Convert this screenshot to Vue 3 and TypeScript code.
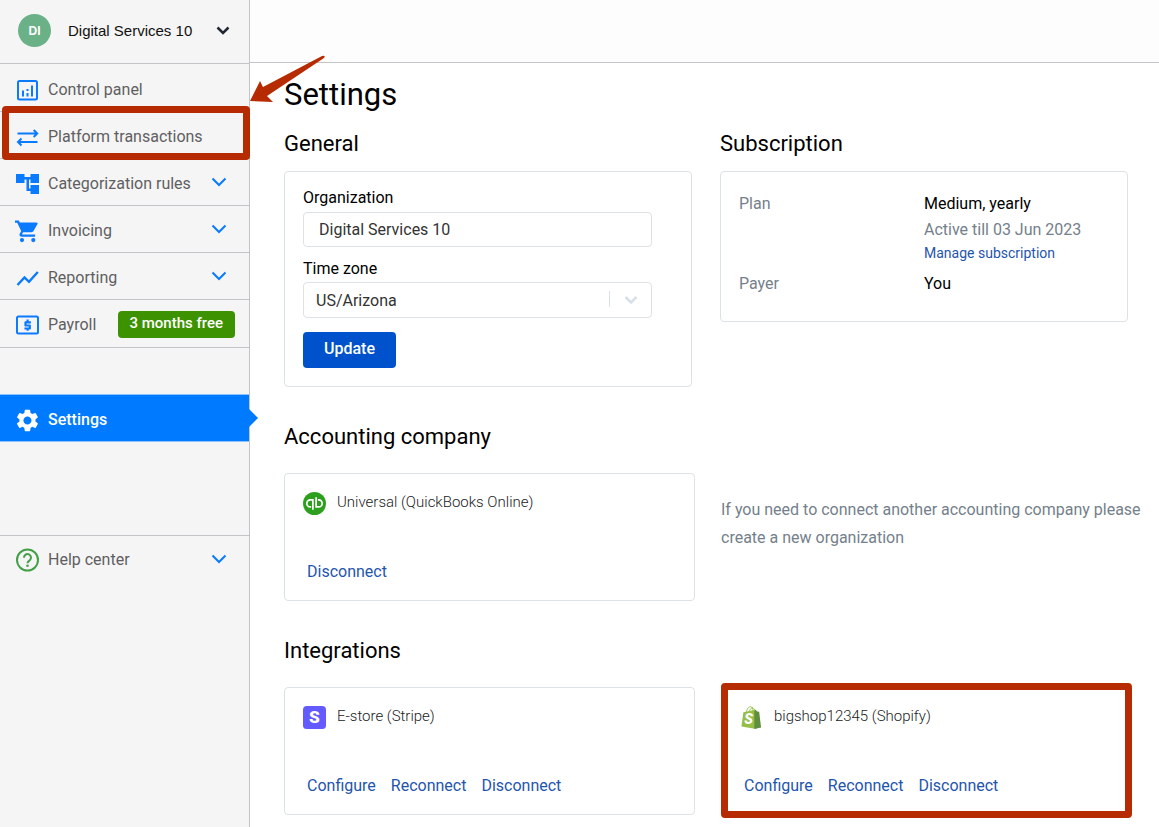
<script setup lang="ts">
import { ref } from 'vue'

interface NavItem {
  label: string
  icon: string
  expandable?: boolean
  badge?: string
  marked?: boolean
}

interface Integration {
  name: string
  logo: 'stripe' | 'shopify'
  marked: boolean
}

const nav: NavItem[] = [
  { label: 'Control panel', icon: 'panel' },
  { label: 'Platform transactions', icon: 'transfer', marked: true },
  { label: 'Categorization rules', icon: 'tree', expandable: true },
  { label: 'Invoicing', icon: 'cart', expandable: true },
  { label: 'Reporting', icon: 'chart', expandable: true },
  { label: 'Payroll', icon: 'payroll', badge: '3 months free' },
]

const integrations: Integration[] = [
  { name: 'E-store (Stripe)', logo: 'stripe', marked: false },
  { name: 'bigshop12345 (Shopify)', logo: 'shopify', marked: true },
]

const organization = ref('Digital Services 10')
const timeZone = ref('US/Arizona')
</script>

<template>
  <div class="app">
    <aside class="sidebar">
      <button class="account" type="button">
        <span class="avatar">DI</span>
        <span class="account-name">Digital Services 10</span>
        <svg class="account-caret" viewBox="0 0 14 10"><path d="M1.500 1.500 7 7 12.500 1.500" /></svg>
      </button>

      <nav class="nav">
        <a
          v-for="item in nav"
          :key="item.label"
          href="#"
          class="nav-item"
          :class="{ marked: item.marked, tall: item.badge }"
        >
          <svg class="nav-icon" viewBox="0 0 24 24">
            <template v-if="item.icon === 'panel'">
              <rect x="3" y="3" width="19" height="18.500" rx="1.500" class="line" />
              <path d="M7 12.500h2V18.500H7zM11.500 15h2v3.500h-2zM11.500 11h2v2h-2zM16 7.500h2v11h-2z" />
            </template>
            <path
              v-else-if="item.icon === 'transfer'"
              class="line"
              d="M2.500 8.500H22M18.700 5l3.500 3.500-3.500 3.500M22.500 17H3M6.500 13.500 3 17l3.500 3.500"
            />
            <path
              v-else-if="item.icon === 'tree'"
              d="M24 11V2h-8.500v3H9.500V2H1v9h8.500V7.500H11.500V19h4v3H24v-9h-8.500v3.500h-1.500v-9h1.500V11z"
            />
            <path
              v-else-if="item.icon === 'cart'"
              d="M7 19a2.100 2.100 0 1 0 0 4.200A2.100 2.100 0 0 0 7 19zM0 1.500v2.200h2.200l4 8.400-1.500 2.700c-.8 1.500.3 2.900 1.900 2.900h13.500v-2.200H7.400c-.3 0-.4-.2-.3-.4l1-1.800h8.400c.9 0 1.600-.5 2-1.200l4-7.100c.4-.7-.1-1.500-1-1.500H4.900L3.800 1.500zM18.300 19a2.100 2.100 0 1 0 0 4.200 2.100 2.100 0 0 0 0-4.200z"
            />
            <path v-else-if="item.icon === 'chart'" class="line heavy" d="M2.500 19 9.500 11.500l4.500 4.300L22.800 6" />
            <template v-else>
              <rect x="2" y="3.500" width="21" height="17" rx="1.500" class="line" />
              <path d="M11.500 17.800h2.200V16.600h1c.7 0 1.200-.5 1.200-1.100v-3c0-.6-.5-1.100-1.200-1.100h-3.100v-.8h4.300V8.300h-2.200V6.500h-2.200v1.800h-1c-.6 0-1.100.5-1.100 1.100v3c0 .6.500 1.100 1.100 1.100h3.200v.9H9.400v2.200h2.100z" />
            </template>
          </svg>
          <span>{{ item.label }}</span>
          <svg v-if="item.expandable" class="caret" viewBox="0 0 16 10"><path d="M1.500 1.500 8 8l6.500-6.500" /></svg>
          <span v-if="item.badge" class="badge">{{ item.badge }}</span>
        </a>

        <a href="#" class="nav-item active" aria-current="page">
          <svg class="nav-icon" viewBox="0 0 24 24">
            <path
              transform="translate(-1 -1) scale(1.120)"
              d="M19.140 12.940c.040-.3.060-.610.060-.940 0-.320-.020-.640-.070-.940l2.030-1.580a.490.490 0 0 0 .120-.610l-1.920-3.320a.488.488 0 0 0-.590-.220l-2.390.960c-.5-.380-1.030-.7-1.620-.940l-.360-2.540a.484.484 0 0 0-.480-.410h-3.840c-.240 0-.430.170-.470.410l-.360 2.540c-.590.240-1.130.570-1.620.940l-2.390-.960c-.220-.080-.470 0-.590.220L2.740 8.870c-.120.210-.080.470.120.610l2.030 1.580c-.050.3-.090.630-.090.940s.020.640.070.940l-2.030 1.580a.490.490 0 0 0-.120.610l1.920 3.320c.120.220.370.290.590.220l2.390-.960c.5.380 1.030.7 1.620.940l.360 2.540c.050.240.240.410.480.410h3.840c.240 0 .440-.170.470-.410l.360-2.540c.590-.240 1.130-.560 1.620-.940l2.390.960c.220.080.470 0 .590-.220l1.920-3.320c.120-.220.070-.470-.120-.610zM12 15.600c-1.980 0-3.600-1.620-3.600-3.600s1.620-3.600 3.600-3.600 3.600 1.620 3.600 3.600-1.620 3.600-3.600 3.600z"
            />
          </svg>
          <span>Settings</span>
        </a>

        <a href="#" class="nav-item help">
          <svg class="nav-icon" viewBox="0 0 24 24">
            <circle cx="12.500" cy="12" r="10.500" class="line" />
            <path class="line" d="M9 9.700a3.500 3.500 0 1 1 5.700 2.600c-1.300 1-2.200 1.500-2.200 3" />
            <circle cx="12.500" cy="17.800" r="1.300" />
          </svg>
          <span>Help center</span>
          <svg class="caret" viewBox="0 0 16 10"><path d="M1.500 1.500 8 8l6.500-6.500" /></svg>
        </a>
      </nav>
    </aside>

    <div class="page">
      <header class="topbar"></header>
      <main class="content">
        <h1>Settings</h1>

        <div class="row overview">
          <section>
            <h2>General</h2>
            <form class="card general" @submit.prevent>
              <label for="organization">Organization</label>
              <input id="organization" v-model="organization" class="field" type="text" />
              <label for="timezone">Time zone</label>
              <div class="select">
                <select id="timezone" v-model="timeZone" class="field">
                  <option>US/Arizona</option>
                </select>
                <svg class="select-caret" viewBox="0 0 14 10"><path d="M1.500 2 7 7.500 12.500 2" /></svg>
              </div>
              <button class="update" type="submit">Update</button>
            </form>
          </section>

          <section>
            <h2>Subscription</h2>
            <dl class="card plan">
              <dt>Plan</dt>
              <dd>
                Medium, yearly
                <span class="muted">Active till 03 Jun 2023</span>
                <a href="#" class="manage">Manage subscription</a>
              </dd>
              <dt>Payer</dt>
              <dd>You</dd>
            </dl>
          </section>
        </div>

        <section class="block">
          <h2>Accounting company</h2>
          <div class="row">
            <article class="card service">
              <div class="service-head">
                <svg class="logo" viewBox="0 0 24 24">
                  <circle cx="12" cy="12" r="12" fill="#2ca01c" />
                  <g fill="none" stroke="#fff" stroke-width="1.800">
                    <path d="M10.300 18.500V8.200H7.700a3.700 3.700 0 0 0 0 7.400h.8" />
                    <path d="M13.700 5.500v10.100h2.600a3.700 3.700 0 0 0 0-7.400h-.8" />
                  </g>
                </svg>
                <span>Universal (QuickBooks Online)</span>
              </div>
              <div class="actions"><a href="#">Disconnect</a></div>
            </article>
            <p class="hint">If you need to connect another accounting company please create a new organization</p>
          </div>
        </section>

        <section class="block">
          <h2>Integrations</h2>
          <div class="row">
            <article
              v-for="item in integrations"
              :key="item.name"
              class="card service"
              :class="{ marked: item.marked }"
            >
              <div class="service-head">
                <svg v-if="item.logo === 'stripe'" class="logo" viewBox="0 0 24 24">
                  <rect width="24" height="24" rx="4" fill="#635bff" />
                  <text x="12" y="18" text-anchor="middle" class="mark stripe-mark">S</text>
                </svg>
                <svg v-else class="logo" viewBox="0 0 24 24">
                  <path d="M3.500 6.500 16 4l1 20L1.500 21.500z" fill="#95bf47" />
                  <path d="m15 4.200 1.300-.2 1.700 1.800 2 .2L22 22.500 15 24z" fill="#5e8e3e" />
                  <path d="M6.500 7c.6-4 2.500-6.300 4.500-6.300 1.800 0 2.600 2 2.600 4.500M9.500 6.500C10 3.500 12 1.500 13.500 2c1.200.4 1.700 1.700 1.800 3" fill="none" stroke="#95bf47" />
                  <text x="9" y="19" text-anchor="middle" class="mark shopify-mark">S</text>
                </svg>
                <span>{{ item.name }}</span>
              </div>
              <div class="actions">
                <a href="#">Configure</a>
                <a href="#">Reconnect</a>
                <a href="#">Disconnect</a>
              </div>
            </article>
          </div>
        </section>
      </main>
    </div>

    <svg class="pointer" viewBox="0 0 78 52">
      <path d="M1 46 11 26l3 6 59-31q4-1 2 2L18 41l6 6z" />
    </svg>
  </div>
</template>

<style>
body {
  background: #fff;
}
</style>

<style scoped>
* {
  box-sizing: border-box;
}

.app {
  position: relative;
  display: flex;
  min-height: 100vh;
  font-family: Roboto, "Liberation Sans", sans-serif;
  font-size: 16px;
  line-height: 24px;
  color: #000;
}

a {
  color: #1f55ad;
  text-decoration: none;
}

svg {
  display: block;
  flex: none;
}

.sidebar {
  width: 250px;
  flex: none;
  background: #f5f5f5;
  border-right: 1px solid #c4c4c8;
}

.account {
  display: flex;
  align-items: center;
  width: 100%;
  height: 64px;
  padding: 0 19px 2px 18px;
  border: 0;
  border-bottom: 1px solid #c4c4c8;
  background: transparent;
  color: #111;
  font-family: "Liberation Sans", sans-serif;
  font-size: 15px;
}

.avatar {
  display: grid;
  place-items: center;
  width: 33px;
  height: 33px;
  margin-right: 17px;
  border-radius: 50%;
  background: #6bb187;
  color: #fff;
  font-size: 12px;
  font-weight: 700;
}

.account-caret {
  width: 14px;
  height: 10px;
  margin-left: auto;
  fill: none;
  stroke: #222831;
  stroke-width: 2.500;
}

.nav {
  padding-top: 1px;
}

.nav-item {
  position: relative;
  display: flex;
  align-items: center;
  height: 47px;
  padding: 3px 22px 0 15px;
  border-bottom: 1px solid #c4c4c8;
  color: #5f5f62;
}

.nav-item.tall {
  height: 48px;
  padding-right: 14px;
}

.nav-icon {
  width: 24px;
  height: 24px;
  margin-right: 9px;
  fill: #0a7aff;
  stroke: none;
}

.line {
  fill: none;
  stroke: #0a7aff;
  stroke-width: 2;
}

.heavy {
  stroke-width: 2.400;
}

.caret {
  width: 16px;
  height: 10px;
  margin-left: auto;
  margin-bottom: 3px;
  fill: none;
  stroke: #0a7aff;
  stroke-width: 2;
}

.badge {
  margin: 0 0 2px auto;
  padding: 0 12px 3px;
  border-radius: 4px;
  background: #3c9200;
  color: #fff;
  font-size: 15px;
  font-weight: 500;
}

.nav-item.active {
  margin-top: 46px;
  border-top: 1px solid #8fc3ff;
  height: 48px;
  border-bottom-color: #8fc3ff;
  background: #007aff;
  color: #fff;
  font-weight: 500;
}

.active .nav-icon {
  fill: #fff;
}

.active::after {
  content: "";
  position: absolute;
  left: 100%;
  top: 14px;
  border: 9px solid transparent;
  border-left-color: #007aff;
  border-right: 0;
}

.nav-item.help {
  height: 48px;
  padding-top: 1px;
  margin-top: 93px;
  border-top: 1px solid #c4c4c8;
  border-bottom: 0;
}

.help .nav-icon {
  fill: #43a047;
}

.help .line {
  stroke: #43a047;
}

.marked::before {
  content: "";
  position: absolute;
  border: 7px solid #b72b02;
  border-radius: 4px;
}

.nav-item.marked::before {
  inset: -6px -1px -2px 2px;
}

.page {
  flex: 1;
  min-width: 0;
}

.topbar {
  height: 63px;
  background: #fdfdfd;
  border-bottom: 1px solid #c4c4c8;
}

.content {
  padding: 12px 27px 12px 34px;
}

h1 {
  margin: 0 0 9px;
  font-size: 31px;
  line-height: 40px;
  font-weight: 400;
}

h2 {
  margin: 0;
  font-size: 22px;
  line-height: 40px;
  font-weight: 400;
}

.row {
  display: grid;
  grid-template-columns: 1fr 1fr;
  gap: 26px;
}

.overview {
  align-items: start;
  margin-right: 4px;
  gap: 28px;
}

.card {
  position: relative;
  margin: 7px 0 0;
  border: 1px solid #dde2e6;
  border-radius: 4px;
  padding: 18px;
}

.general {
  display: flex;
  flex-direction: column;
  align-items: flex-start;
  padding: 14px 39px 18px 18px;
}

.field {
  display: block;
  width: 100%;
  height: 35px;
  margin: 2px 0 10px;
  padding: 0 15px;
  border: 1px solid #dde2e6;
  border-radius: 4px;
  background: #fff;
  color: #333;
  font: inherit;
}

.select {
  position: relative;
  width: 100%;
  margin-bottom: 4px;
}

select.field {
  height: 36px;
  margin-top: 1px;
  padding: 1px 12px 0;
  appearance: none;
}

.select-caret {
  position: absolute;
  top: 14px;
  right: 14px;
  width: 14px;
  height: 10px;
  fill: none;
  stroke: #d9dfea;
  stroke-width: 2.500;
}

.select::after {
  content: "";
  position: absolute;
  top: 10px;
  right: 42px;
  width: 1px;
  height: 16px;
  background: #d9dfea;
}

.update {
  height: 36px;
  padding: 0 21px 3px;
  border: 0;
  border-radius: 4px;
  background: #0052cc;
  color: #fff;
  font: inherit;
  font-weight: 500;
}

.plan {
  display: grid;
  grid-template-columns: 185px 1fr;
  row-gap: 8px;
  padding: 20px 18px 25px;
}

.plan dt,
.muted {
  color: #747f8b;
}

.plan dd {
  margin: 0;
}

.muted,
.manage {
  display: block;
}

.muted {
  margin-top: 2px;
}

.manage {
  font-size: 14px;
  line-height: 22px;
}

.block {
  margin-top: 30px;
}

.service {
  height: 128px;
  margin-top: 16px;
}

.service-head {
  display: flex;
  align-items: flex-start;
  gap: 11px;
  font-size: 15px;
  font-weight: 300;
  line-height: 20px;
  color: #222;
}

.logo {
  width: 23px;
  height: 23px;
}

.mark {
  fill: #fff;
  font-weight: 900;
}

.stripe-mark {
  font-size: 18px;
}

.shopify-mark {
  font-size: 15px;
  font-style: italic;
}

.actions {
  display: flex;
  gap: 15px;
  margin: 45px 0 0 4px;
}

.service.marked::before {
  inset: -5px -1px -4px -1px;
}

.hint {
  margin: 39px -16px 0 0;
  line-height: 28px;
  color: #747f8b;
}

.pointer {
  position: absolute;
  left: 249px;
  top: 55px;
  width: 78px;
  height: 52px;
  fill: #b72b02;
}
</style>
